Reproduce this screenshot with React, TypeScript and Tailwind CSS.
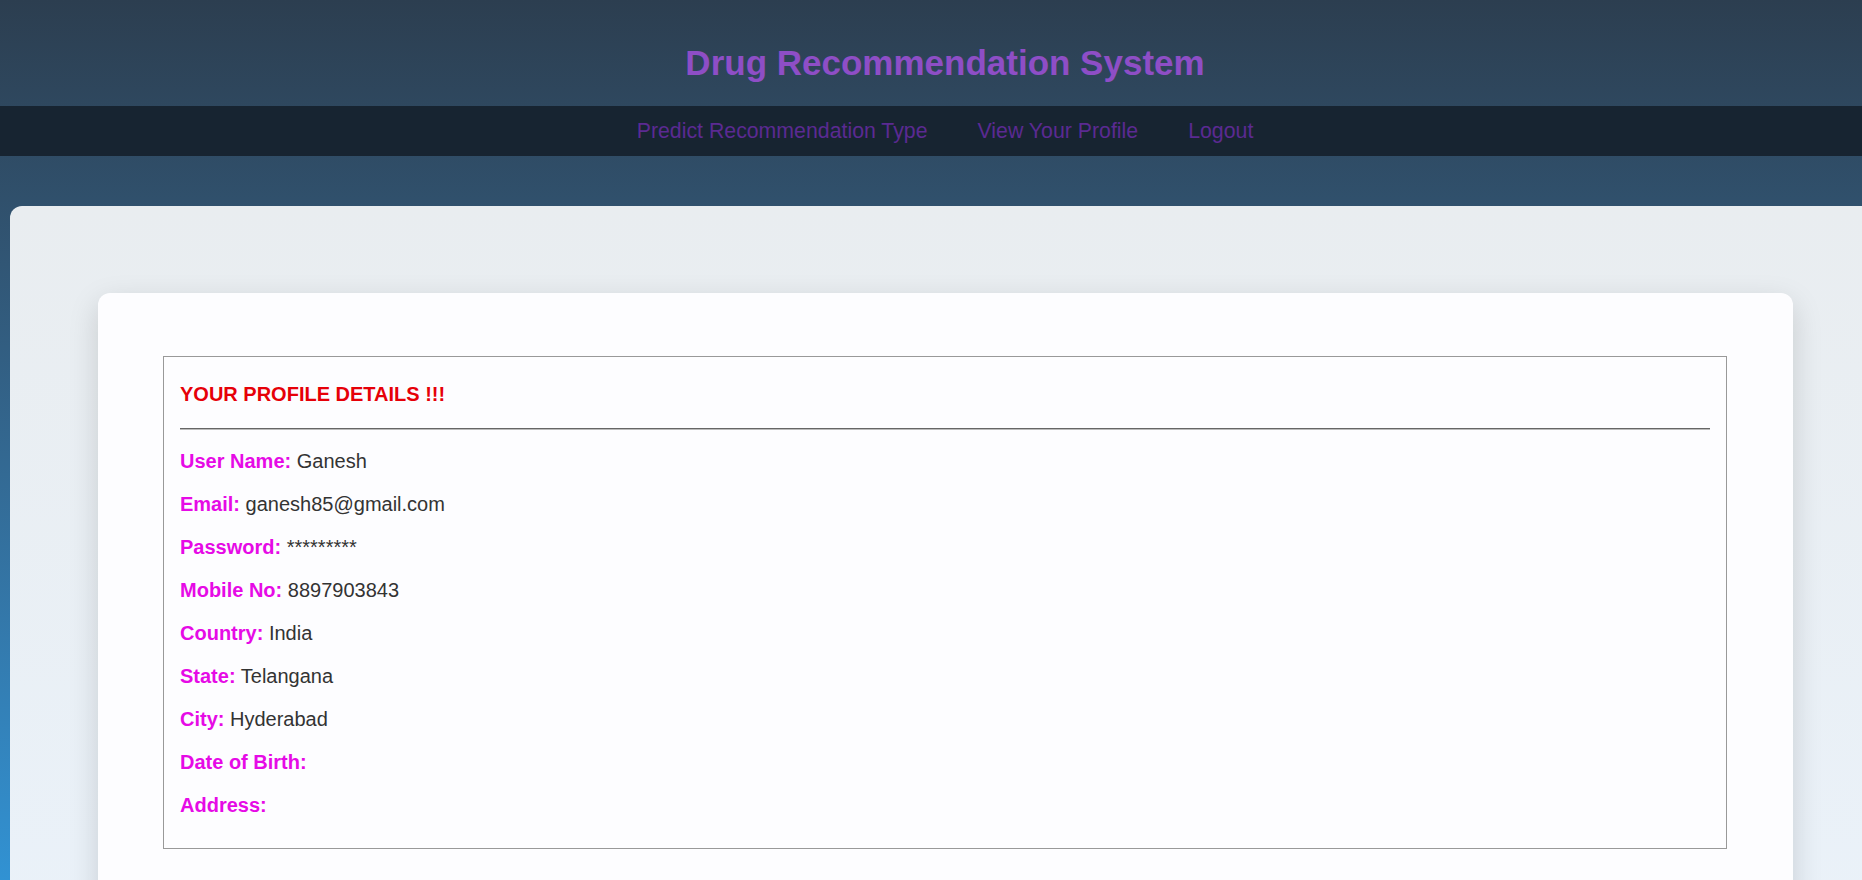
const rows: [string, string][] = [
  ["User Name:", "Ganesh"],
  ["Email:", "ganesh85@gmail.com"],
  ["Password:", "*********"],
  ["Mobile No:", "8897903843"],
  ["Country:", "India"],
  ["State:", "Telangana"],
  ["City:", "Hyderabad"],
  ["Date of Birth:", ""],
  ["Address:", ""],
];

const links = ["Predict Recommendation Type", "View Your Profile", "Logout"];

export default function App() {
  return (
    <div className="h-screen overflow-hidden bg-gradient-to-b from-[#2c3e50] to-[#3192d3] font-['Liberation_Sans',Arial,sans-serif]">
      <header className="h-[106px] flex items-center justify-center pt-[18px] pl-[28px]">
        <h1 className="text-[35px] font-bold text-[#8e4ec6] leading-none">
          Drug Recommendation System
        </h1>
      </header>

      <nav className="h-[50px] bg-[#172431] flex items-center justify-center pl-[28px] pt-[2px]">
        {links.map((l) => (
          <a key={l} href="#" className="px-[25px] text-[21.3px] text-[#5b2a92] leading-none">
            {l}
          </a>
        ))}
      </nav>

      <main className="mt-[50px] ml-[10px] w-[1900px] h-[800px] rounded-tl-[12px] bg-gradient-to-b from-[#e9edf0] to-[#eaf2fa] pl-[88px] pt-[87px]">
        <div className="w-[1695px] rounded-[12px] bg-[#fdfdff] shadow-[0_10px_30px_rgba(0,0,0,0.15)] pl-[65px] pr-[66px] pt-[63px] pb-[60px]">
          <div className="border border-[#999] bg-[#fdfdff] pl-[16px] pr-[16px] pt-[26px] pb-[31px] text-[20px] leading-[23px]">
            <h3 className="font-bold text-[#e60008]">YOUR PROFILE DETAILS !!!</h3>
            <div className="mt-[22px] border-t border-[#666] border-b border-b-[#bbb]" />
            <div className="mt-[20px] flex flex-col gap-[20px]">
              {rows.map(([k, v]) => (
                <p key={k} className="text-[#333]">
                  <span className="font-bold text-[#e60ae6]">{k}</span> {v}
                </p>
              ))}
            </div>
          </div>
        </div>
      </main>
    </div>
  );
}
